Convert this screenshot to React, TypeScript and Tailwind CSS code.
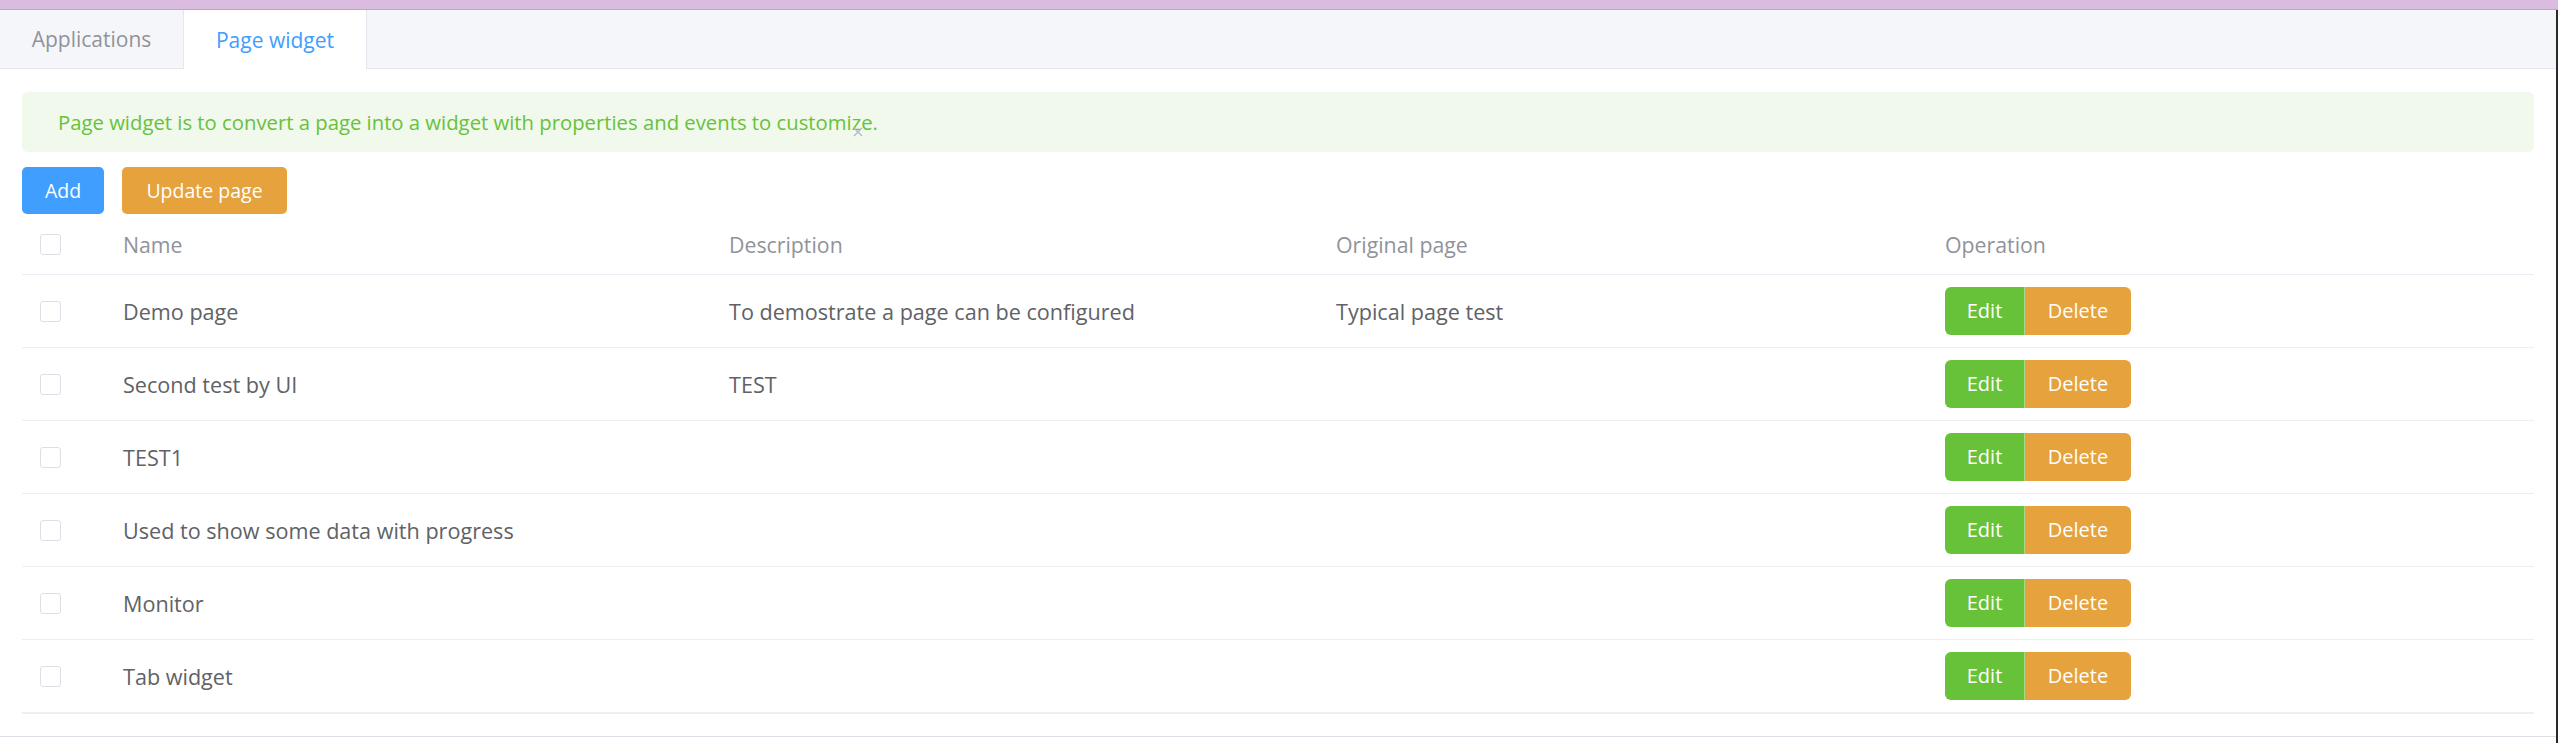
import React from 'react';

const rows = [
  { name: 'Demo page', description: 'To demostrate a page can be configured', original: 'Typical page test' },
  { name: 'Second test by UI', description: 'TEST', original: '' },
  { name: 'TEST1', description: '', original: '' },
  { name: 'Used to show some data with progress', description: '', original: '' },
  { name: 'Monitor', description: '', original: '' },
  { name: 'Tab widget', description: '', original: '' },
];

function Checkbox() {
  return <span className="block w-[21px] h-[21px] rounded-[3px] border border-[#dcdfe6] bg-white" />;
}

export default function App() {
  return (
    <div className="w-full h-[743px] bg-white flex flex-col overflow-hidden" style={{ fontFamily: '"Open Sans", "Noto Sans", sans-serif' }}>
      {/* top strip */}
      <div className="h-[10px] bg-[#d9bce0] border-b border-[#bda5c8] shrink-0" />

      <div className="flex flex-1 min-h-0">
        <div className="flex-1 flex flex-col">
          {/* tabs */}
          <div className="h-[59px] bg-[#f5f6fa] border-b border-[#e4e7ed] flex shrink-0">
            <div className="w-[183px] flex items-center justify-center pt-[2px] text-[21px] text-[#909399]">Applications</div>
            <div className="w-[184px] h-[59px] flex items-center justify-center pt-[2px] text-[21px] text-[#409eff] bg-white border-x border-[#e4e7ed]">
              Page widget
            </div>
          </div>

          <div className="px-[22px] pt-[23px]">
            {/* alert */}
            <div className="relative h-[60px] rounded-[6px] bg-[#f0f9eb] flex items-center pl-[36px] text-[20.3px] text-[#67c23a]">
              Page widget is to convert a page into a widget with properties and events to customize.
              <svg className="absolute left-[831px] top-[35px]" width="10" height="10" viewBox="0 0 10 10">
                <path d="M1 1L9 9M9 1L1 9" stroke="#b4b7bd" strokeWidth="1.2" />
              </svg>
            </div>

            {/* actions */}
            <div className="flex gap-[18px] mt-[15px]">
              <button className="w-[82px] h-[47px] rounded-[5px] bg-[#409eff] text-white text-[19.5px]">Add</button>
              <button className="w-[165px] h-[47px] rounded-[5px] bg-[#e6a23c] text-white text-[19.5px]">Update page</button>
            </div>

            {/* table */}
            <div className="border-b border-[#ebeef5]">
              <div className="grid grid-cols-[101px_606px_607px_609px_1fr] h-[61px] items-center border-b border-[#ebeef5] text-[21.3px] text-[#909399]">
                <div className="pl-[18px]"><Checkbox /></div>
                <div className="pt-[2px]">Name</div>
                <div className="pt-[2px]">Description</div>
                <div className="pt-[2px]">Original page</div>
                <div className="pt-[2px]">Operation</div>
              </div>
              {rows.map((r) => (
                <div key={r.name} className="grid grid-cols-[101px_606px_607px_609px_1fr] h-[73px] items-center border-b border-[#ebeef5] text-[21.6px] text-[#606266]">
                  <div className="pl-[18px]"><Checkbox /></div>
                  <div className="pt-[2px]">{r.name}</div>
                  <div className="pt-[2px]">{r.description}</div>
                  <div className="pt-[2px]">{r.original}</div>
                  <div className="flex">
                    <button className="w-[80px] h-[48px] rounded-l-[6px] bg-[#67c23a] text-white text-[20px] border-r border-[#a3da88]">Edit</button>
                    <button className="w-[106px] h-[48px] rounded-r-[6px] bg-[#e6a23c] text-white text-[20px]">Delete</button>
                  </div>
                </div>
              ))}
            </div>
          </div>

          <div className="mt-[22px] border-t border-[#dcdfe6]" />
        </div>
        <div className="w-[2px] bg-[#2a2a2a]" />
      </div>
    </div>
  );
}
